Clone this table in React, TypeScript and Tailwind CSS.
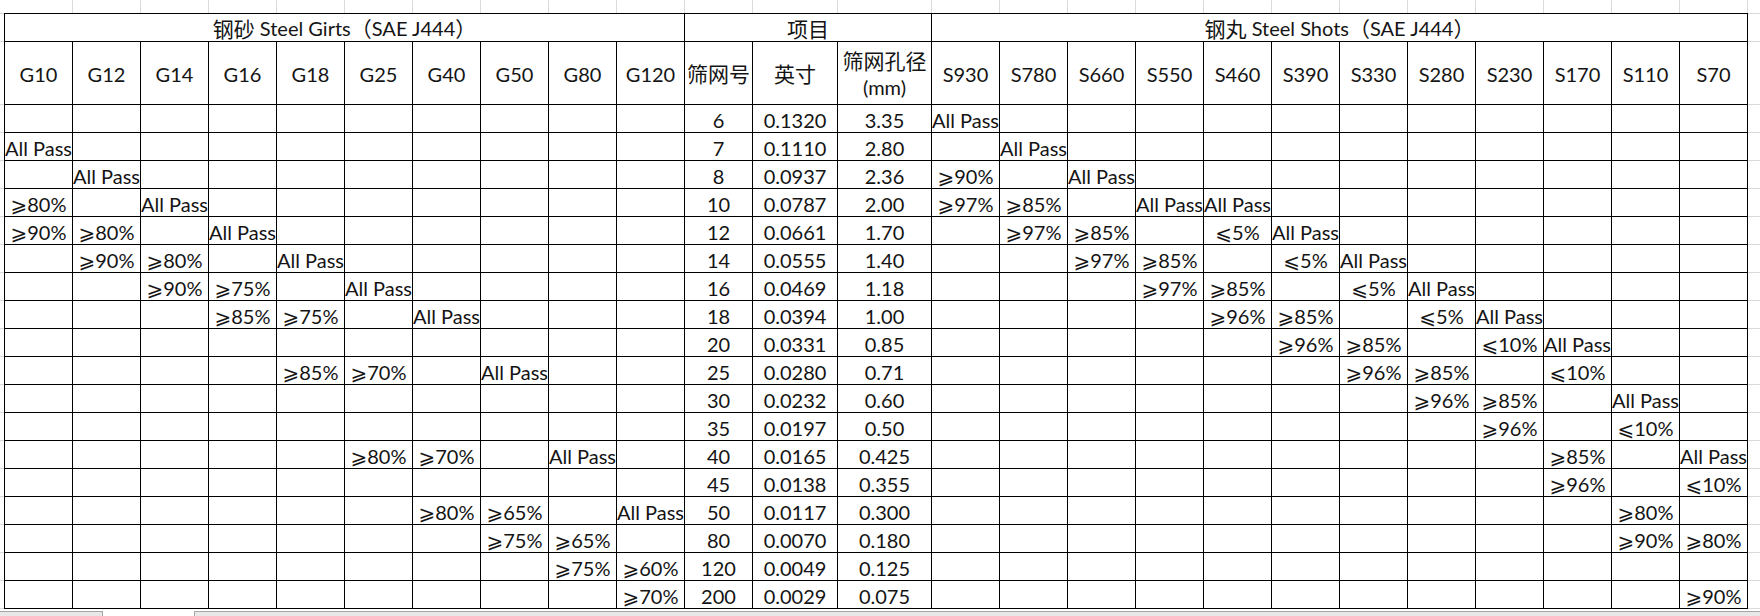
import React from "react";

const GE = "\u2A7E";
const LE = "\u2A7D";

const gCols = ["G10", "G12", "G14", "G16", "G18", "G25", "G40", "G50", "G80", "G120"];
const sCols = ["S930", "S780", "S660", "S550", "S460", "S390", "S330", "S280", "S230", "S170", "S110", "S70"];

type Row = [string, string, string, Record<string, string>, Record<string, string>];

const rows: Row[] = [
  ["6", "0.1320", "3.35", {}, { S930: "A" }],
  ["7", "0.1110", "2.80", { G10: "A" }, { S780: "A" }],
  ["8", "0.0937", "2.36", { G12: "A" }, { S930: ">90", S660: "A" }],
  ["10", "0.0787", "2.00", { G10: ">80", G14: "A" }, { S930: ">97", S780: ">85", S550: "A", S460: "A" }],
  ["12", "0.0661", "1.70", { G10: ">90", G12: ">80", G16: "A" }, { S780: ">97", S660: ">85", S460: "<5", S390: "A" }],
  ["14", "0.0555", "1.40", { G12: ">90", G14: ">80", G18: "A" }, { S660: ">97", S550: ">85", S390: "<5", S330: "A" }],
  ["16", "0.0469", "1.18", { G14: ">90", G16: ">75", G25: "A" }, { S550: ">97", S460: ">85", S330: "<5", S280: "A" }],
  ["18", "0.0394", "1.00", { G16: ">85", G18: ">75", G40: "A" }, { S460: ">96", S390: ">85", S280: "<5", S230: "A" }],
  ["20", "0.0331", "0.85", {}, { S390: ">96", S330: ">85", S230: "<10", S170: "A" }],
  ["25", "0.0280", "0.71", { G18: ">85", G25: ">70", G50: "A" }, { S330: ">96", S280: ">85", S170: "<10" }],
  ["30", "0.0232", "0.60", {}, { S280: ">96", S230: ">85", S110: "A" }],
  ["35", "0.0197", "0.50", {}, { S230: ">96", S110: "<10" }],
  ["40", "0.0165", "0.425", { G25: ">80", G40: ">70", G80: "A" }, { S170: ">85", S70: "A" }],
  ["45", "0.0138", "0.355", {}, { S170: ">96", S70: "<10" }],
  ["50", "0.0117", "0.300", { G40: ">80", G50: ">65", G120: "A" }, { S110: ">80" }],
  ["80", "0.0070", "0.180", { G50: ">75", G80: ">65" }, { S110: ">90", S70: ">80" }],
  ["120", "0.0049", "0.125", { G80: ">75", G120: ">60" }, {}],
  ["200", "0.0029", "0.075", { G120: ">70" }, { S70: ">90" }],
];

function fmt(v?: string): string {
  if (!v) return "";
  if (v === "A") return "All Pass";
  if (v[0] === ">") return GE + v.slice(1) + "%";
  if (v[0] === "<") return LE + v.slice(1) + "%";
  return v;
}

const colWidthClasses: string[] = [
  ...Array(11).fill("w-[68px]"),
  "w-[85px]",
  "w-[94px]",
  ...Array(12).fill("w-[68px]"),
];

const cell = "bg-white flex items-center justify-center whitespace-nowrap leading-none pt-[3px]";
const headCell = "bg-white flex items-center justify-center whitespace-nowrap leading-none pt-[1px]";
const cjk = "text-[21px]";

function SideLines({ grow }: { grow?: boolean }) {
  return (
    <div className={grow ? "flex-1 flex flex-col" : "w-[4px] flex flex-col"}>
      <div className="h-[29px] border-y border-[#dadada]" />
      <div className="h-[63px] border-b border-[#dadada]" />
      {rows.map((_, i) => (
        <div key={i} className="h-[28px] border-b border-[#dadada]" />
      ))}
    </div>
  );
}

export default function App() {
  return (
    <div className="w-[1760px] h-[616px] bg-white overflow-hidden flex flex-col text-[20px] text-[#141414] font-['Lato','Noto_Sans_CJK_SC','DejaVu_Sans',sans-serif]">
      {/* faint gridlines above the table */}
      <div className="h-[13px] shrink-0 flex">
        <div className="w-[5px]" />
        {colWidthClasses.map((w, i) => (
          <div key={i} className={`${w} border-r border-[#dadada]`} />
        ))}
      </div>

      <div className="flex shrink-0">
        <SideLines />
        <div className="grid grid-cols-[repeat(11,67px)_84px_93px_repeat(12,67px)] grid-rows-[27px_62px_repeat(18,27px)] gap-px bg-black p-px">
          <div className={`${headCell} col-span-10`}>
            <span className={cjk}>钢砂</span>&nbsp;Steel Girts<span className={cjk}>（</span>SAE J444<span className={cjk}>）</span>
          </div>
          <div className={`${headCell} col-span-3`}>
            <span className={cjk}>项目</span>
          </div>
          <div className={`${headCell} col-span-12`}>
            <span className={cjk}>钢丸</span>&nbsp;Steel Shots<span className={cjk}>（</span>SAE J444<span className={cjk}>）</span>
          </div>

          {gCols.map((c) => (
            <div key={c} className={headCell}>
              {c}
            </div>
          ))}
          <div className={headCell}>
            <span className={cjk}>筛网号</span>
          </div>
          <div className={headCell}>
            <span className={cjk}>英寸</span>
          </div>
          <div className="bg-white flex flex-col items-center justify-center whitespace-nowrap leading-[27px] pt-[1px]">
            <span className={cjk}>筛网孔径</span>
            <span>(mm)</span>
          </div>
          {sCols.map((c) => (
            <div key={c} className={headCell}>
              {c}
            </div>
          ))}

          {rows.map((r, ri) => (
            <React.Fragment key={ri}>
              {gCols.map((c) => (
                <div key={c} className={cell}>
                  {fmt(r[3][c])}
                </div>
              ))}
              <div className={cell}>{r[0]}</div>
              <div className={cell}>{r[1]}</div>
              <div className={cell}>{r[2]}</div>
              {sCols.map((c) => (
                <div key={c} className={cell}>
                  {fmt(r[4][c])}
                </div>
              ))}
            </React.Fragment>
          ))}
        </div>
        <SideLines grow />
      </div>

      {/* sheet tab bar */}
      <div className="flex-1 flex flex-col">
        <div className="h-[2px]" />
        <div className="flex-1 flex">
          <div className="w-[103px] bg-[#e8e8e8] border-t border-r border-[#a6a6a6]" />
          <div className="w-[91px]" />
          <div className="flex-1 bg-[#e8e8e8] border-t border-l border-[#a6a6a6]" />
        </div>
      </div>
    </div>
  );
}
